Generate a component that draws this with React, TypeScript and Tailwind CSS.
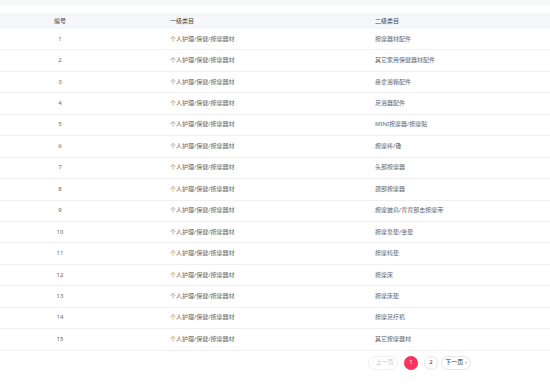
import React from "react";

const rows: [string, string][] = [
  ["1", "按摩器材配件"],
  ["2", "其它家用保健器材配件"],
  ["3", "桑拿浴箱配件"],
  ["4", "足浴器配件"],
  ["5", "MINI按摩器/按摩贴"],
  ["6", "按摩棒/锤"],
  ["7", "头部按摩器"],
  ["8", "颈部按摩器"],
  ["9", "按摩披肩/背背部击按摩带"],
  ["10", "按摩靠垫/坐垫"],
  ["11", "按摩椅垫"],
  ["12", "按摩床"],
  ["13", "按摩床垫"],
  ["14", "按摩足疗机"],
  ["15", "其它按摩器材"],
];

export default function App() {
  return (
    <div
      className="w-[550px] h-[386px] bg-white overflow-hidden text-[6px] text-[#666]"
      style={{ fontFamily: '"Noto Sans", "Noto Sans CJK SC", sans-serif' }}
    >
      <div className="h-[6px] bg-[#f7f8fa]" />
      <div className="h-[7px]" />
      <div className="grid grid-cols-[120px_205px_1fr] h-[16px] items-center bg-[#f5f7fa] text-[#444]">
        <div className="text-center">编号</div>
        <div className="pl-[50px]">一级类目</div>
        <div className="pl-[50px]">二级类目</div>
      </div>
      {rows.map(([n, c]) => (
        <div
          key={n}
          className="grid grid-cols-[120px_205px_1fr] h-[21.45px] items-center border-b border-[#f0f0f0]"
        >
          <div className="text-center">{n}</div>
          <div className="pl-[50px]">个人护理/保健/按摩器材</div>
          <div className="pl-[50px]">{c}</div>
        </div>
      ))}
      <div className="flex items-center justify-end pr-[79px] mt-[5px]">
        <div className="flex items-center h-[14px] w-[30px] justify-center rounded-full border border-[#f0f0f0] text-[#c8c8c8] gap-[2px]">
          <span className="text-[5px]">‹</span>
          <span>上一页</span>
        </div>
        <div className="ml-[6px] flex items-center justify-center w-[14px] h-[14px] rounded-full bg-[#f7355f] text-white">
          1
        </div>
        <div className="ml-[6px] flex items-center justify-center w-[14px] h-[14px] rounded-full border border-[#e6e6e6] text-[#333]">
          2
        </div>
        <div className="ml-[3px] flex items-center h-[14px] w-[30px] justify-center rounded-full border border-[#e6e6e6] text-[#333] gap-[2px]">
          <span>下一页</span>
          <span className="text-[5px]">›</span>
        </div>
      </div>
    </div>
  );
}
